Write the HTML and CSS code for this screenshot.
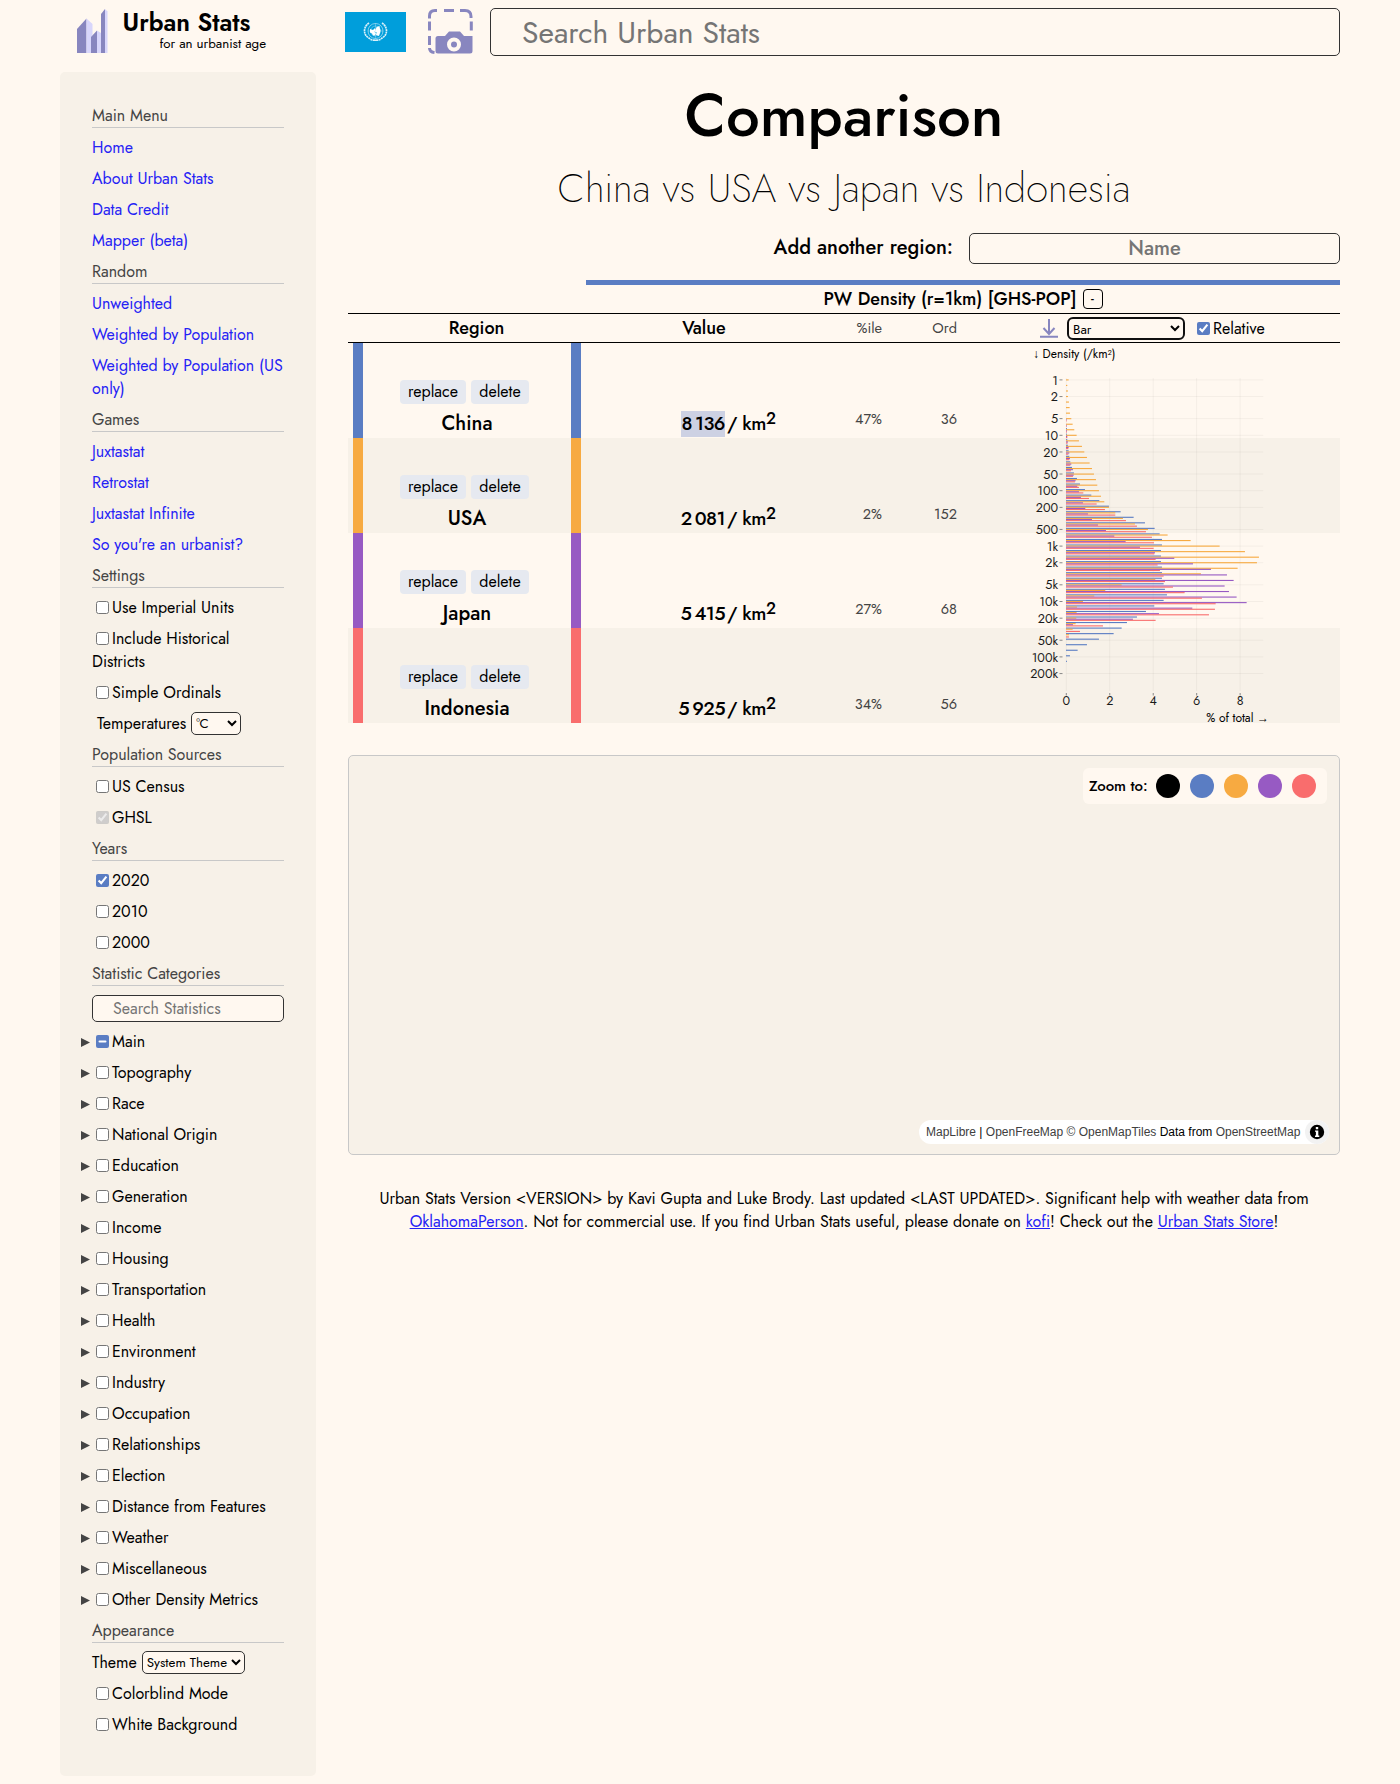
FILE: index.html
```html
<!DOCTYPE html>
<html lang="en">
<head>
<meta charset="utf-8">
<title>Urban Stats</title>
<link rel="stylesheet" href="styles.css">
</head>
<body>
<header class="header">
  <a class="logo" href="#">
    <svg class="logo-mark" width="32" height="44" viewBox="0 0 32 44">
      <path fill="#8886bf" d="M1 44V20L10.500 9.500V44z"/><path fill="#d8d6fb" d="M10.500 9.500L16.500 15V44H10.500z"/>
      <path fill="#8886bf" d="M15 44V28L21 21.500V44z"/><path fill="#d8d6fb" d="M21 21.500L25 24V44H21z"/>
      <path fill="#8886bf" d="M25 44V5L29 0V44z"/><path fill="#d8d6fb" d="M29 0L31.500 2.500V44H29z"/>
    </svg>
    <span class="logo-text"><b>Urban Stats</b><small>for an urbanist age</small></span>
  </a>
  <svg class="flag" width="61" height="40" viewBox="0 0 61 40">
    <rect width="61" height="40" fill="#009edb"/>
    <g fill="none" stroke="#fff">
      <circle cx="30.500" cy="19" r="7.500" stroke-width=".5"/><circle cx="30.500" cy="19" r="5" stroke-width=".3"/>
      <path d="M24 11c-6 4-6 12 0 15q3 3 8 2M37 11c6 4 6 12 0 15q-3 3-8 2" stroke-width="1.700" stroke-dasharray="2 .5" stroke-opacity=".85"/>
      <path d="M30.500 11.500v15M23 19h15" stroke-width=".3"/>
    </g>
    <path fill="#fff" d="M25 17l3 1 2-2 .5 2-1 2 1.500 1-1 2.500-2 0-1-2-2-1zM31.500 15l3-1 .5 3 .5 1-.5 3-1 3-3-1 .5-3-1.500 0z"/>
  </svg>
  <svg class="camera" width="45" height="45" viewBox="0 0 45 45">
    <g fill="none" stroke="#8886bf" stroke-width="3">
      <path d="M1.500 9.500V7Q1.500 1.500 7 1.500H9M16 1.500h10M32 1.500h5q6 0 6 6V9M1.500 12.500v9M1.500 27v9M1.500 39q0 4 5 4.500M43.300 12.500v9"/>
    </g>
    <path fill="#8886bf" d="M10 27h7l4-4.500h11l4 4.500h8.500v15q0 2.500-2.500 2.500H10q-2.500 0-2.500-2.500V29.500q0-2.500 2.500-2.500z"/>
    <circle cx="26" cy="35.500" r="5" fill="#8886bf" stroke="#fff8f0" stroke-width="4"/>
  </svg>
  <input class="search" placeholder="Search Urban Stats">
</header>

<div class="body">
<nav class="sidebar">
  <h2>Main Menu</h2>
  <a href="#">Home</a>
  <a href="#">About Urban Stats</a>
  <a href="#">Data Credit</a>
  <a href="#">Mapper (beta)</a>
  <h2>Random</h2>
  <a href="#">Unweighted</a>
  <a href="#">Weighted by Population</a>
  <a href="#">Weighted by Population (US only)</a>
  <h2>Games</h2>
  <a href="#">Juxtastat</a>
  <a href="#">Retrostat</a>
  <a href="#">Juxtastat Infinite</a>
  <a href="#">So you're an urbanist?</a>
  <h2>Settings</h2>
  <label><input type="checkbox">Use Imperial Units</label>
  <label><input type="checkbox">Include Historical Districts</label>
  <label><input type="checkbox">Simple Ordinals</label>
  <div class="field temp">Temperatures <select><option>°C</option></select></div>
  <h2>Population Sources</h2>
  <label><input type="checkbox">US Census</label>
  <label><input type="checkbox" checked disabled>GHSL</label>
  <h2>Years</h2>
  <label><input type="checkbox" checked>2020</label>
  <label><input type="checkbox">2010</label>
  <label><input type="checkbox">2000</label>
  <h2>Statistic Categories</h2>
  <input class="stat-search" placeholder="Search Statistics">
  <label class="cat"><input type="checkbox" id="main-category">Main</label>
  <label class="cat"><input type="checkbox">Topography</label>
  <label class="cat"><input type="checkbox">Race</label>
  <label class="cat"><input type="checkbox">National Origin</label>
  <label class="cat"><input type="checkbox">Education</label>
  <label class="cat"><input type="checkbox">Generation</label>
  <label class="cat"><input type="checkbox">Income</label>
  <label class="cat"><input type="checkbox">Housing</label>
  <label class="cat"><input type="checkbox">Transportation</label>
  <label class="cat"><input type="checkbox">Health</label>
  <label class="cat"><input type="checkbox">Environment</label>
  <label class="cat"><input type="checkbox">Industry</label>
  <label class="cat"><input type="checkbox">Occupation</label>
  <label class="cat"><input type="checkbox">Relationships</label>
  <label class="cat"><input type="checkbox">Election</label>
  <label class="cat"><input type="checkbox">Distance from Features</label>
  <label class="cat"><input type="checkbox">Weather</label>
  <label class="cat"><input type="checkbox">Miscellaneous</label>
  <label class="cat"><input type="checkbox">Other Density Metrics</label>
  <h2>Appearance</h2>
  <div class="field theme">Theme <select><option>System Theme</option></select></div>
  <label><input type="checkbox">Colorblind Mode</label>
  <label><input type="checkbox">White Background</label>
</nav>

<main class="content">
  <h1>Comparison</h1>
  <p class="subtitle">China vs USA vs Japan vs Indonesia</p>
  <div class="add"><span>Add another region:</span><input placeholder="Name"></div>

  <section class="table">
    <div class="stat-bar"></div>
    <div class="stat-name"><span>PW Density (r=1km) [GHS-POP]</span><button>-</button></div>
    <div class="head">
      <b class="h-region">Region</b><b class="h-value">Value</b><span class="pct">%ile</span><span class="ord">Ord</span>
      <div class="controls">
        <svg width="18" height="19" viewBox="0 0 18 19" fill="none" stroke="#8886bf" stroke-width="2"><path d="M9 0v14M3.500 9L9 15l5.500-6M0 17.700h18"/></svg>
        <select><option>Bar</option></select>
        <label><input type="checkbox" checked>Relative</label>
      </div>
    </div>
    <div class="rows">
      <div class="row blue"><i></i><div class="region"><div class="actions"><button>replace</button><button>delete</button></div><b>China</b></div><i></i><div class="value"><mark>8&#8201;136</mark><span>/ km<sup>2</sup></span></div><span class="pct">47%</span><span class="ord">36</span></div>
      <div class="row orange"><i></i><div class="region"><div class="actions"><button>replace</button><button>delete</button></div><b>USA</b></div><i></i><div class="value"><em>2&#8201;081</em><span>/ km<sup>2</sup></span></div><span class="pct">2%</span><span class="ord">152</span></div>
      <div class="row purple"><i></i><div class="region"><div class="actions"><button>replace</button><button>delete</button></div><b>Japan</b></div><i></i><div class="value"><em>5&#8201;415</em><span>/ km<sup>2</sup></span></div><span class="pct">27%</span><span class="ord">68</span></div>
      <div class="row red"><i></i><div class="region"><div class="actions"><button>replace</button><button>delete</button></div><b>Indonesia</b></div><i></i><div class="value"><em>5&#8201;925</em><span>/ km<sup>2</sup></span></div><span class="pct">34%</span><span class="ord">56</span></div>
      <svg class="chart" id="chart" width="250" height="384" viewBox="1020 343 250 384"></svg>
    </div>
  </section>

  <section class="map">
    <div class="zoom"><b>Zoom to:</b><i class="black"></i><i class="blue"></i><i class="orange"></i><i class="purple"></i><i class="red"></i></div>
    <div class="attribution"><span><a>MapLibre</a> | <a>OpenFreeMap</a> <a>© OpenMapTiles</a> Data from <a>OpenStreetMap</a></span>
      <svg width="24" height="24" viewBox="0 0 24 24"><circle cx="12" cy="12" r="12" fill="#f2f2f2"/><circle cx="12" cy="12" r="7.200"/><path fill="#fff" d="M10.800 7h2.400v2.200h-2.400zM10 10.400h3.300v5.200h1V17H10v-1.400h.9v-3.800H10z"/></svg>
    </div>
  </section>

  <footer>
    <div>Urban Stats Version &lt;VERSION&gt; by Kavi Gupta and Luke Brody. Last updated &lt;LAST UPDATED&gt;. Significant help with weather data from</div>
    <div><a href="#">OklahomaPerson</a>. Not for commercial use. If you find Urban Stats useful, please donate on <a href="#">kofi</a>! Check out the <a href="#">Urban Stats Store</a>!</div>
  </footer>
</main>
</div>
<script src="script.js"></script>
</body>
</html>
```
FILE: styles.css
```css
* { box-sizing: border-box; }
body {
  margin: 0;
  background: #fff8f0;
  color: #000;
  font: 16px/23px Jost, sans-serif;
  accent-color: #5a7dc3;
}
h1, h2, p { margin: 0; font-weight: 400; }
i, em { font-style: normal; }
a { color: #2522f5; }
button, input, select { font-family: inherit; color: #000; }
input[type="checkbox"] { width: 13px; height: 13px; margin: 3px 3px 3px 4px; flex: none; vertical-align: -1px; }
select {
  background: #fff8f0;
  border: 1px solid #333;
  border-radius: 5px;
  height: 23px;
  font-size: 13.333px;
  padding: 0;
}
.search, .stat-search, .add input {
  background: #fff8f0;
  border: 1px solid #333;
  border-radius: 5px;
}
::placeholder { color: #757575; opacity: 1; }

.header { display: flex; align-items: flex-start; height: 72px; padding: 8px 60px 0 76px; }
.logo { display: flex; width: 269px; color: #000; text-decoration: none; padding-top: 1px; }
.logo-text { display: flex; flex-direction: column; margin-left: 14.500px; }
.logo-text b { font-size: 24.600px; line-height: 27px; font-weight: 600; }
.logo-text small { font-size: 13.333px; line-height: 16px; margin-left: 37px; }
.flag { margin: 4px 22px 0 0; }
.camera { margin: 1px 17px 0 0; }
.search { flex: 1; height: 48px; padding: 0 31px; font-size: 30px; }

.body { display: flex; gap: 32px; padding: 0 60px 8px; }
.sidebar {
  width: 256px;
  height: 1704px;
  padding: 32px;
  border-radius: 5px;
  background: #f7f1e8;
  display: flex;
  flex-direction: column;
  gap: 8px;
}
.sidebar > * { flex: none; }
.sidebar a { text-decoration: none; }
.sidebar h2 { height: 24px; font-size: 16px; line-height: 23px; color: #444; border-bottom: 1px solid #c8c8c8; }
.field { height: 23px; display: flex; gap: 5px; }
.temp { padding-left: 5px; }
.temp select { width: 50px; }
.theme select { width: 103px; }
.stat-search { height: 27px; margin-top: 1px; padding: 0 20px; font-size: 16px; }
.cat { display: flex; align-items: center; margin-left: -11px; }
.cat::before {
  content: "";
  width: 9px;
  height: 9px;
  margin: 2px 2px 0 0;
  background: #444;
  clip-path: polygon(0 0, 100% 50%, 0 100%);
}

.content { width: 992px; }
h1 { text-align: center; font-size: 60px; line-height: 72px; font-weight: 500; padding-top: 8px; }
.subtitle { text-align: center; font-size: 40px; line-height: 50px; font-weight: 200; margin-top: 11px; }
.add { display: flex; justify-content: flex-end; margin-top: 20px; font-size: 20px; font-weight: 500; }
.add span { line-height: 30px; margin-right: 16px; }
.add input { width: 371px; height: 31px; text-align: center; font-size: 20px; font-weight: 500; }

.table { margin-top: 16px; }
.stat-bar { height: 5px; margin-left: 238px; background: #5a7dc3; }
.stat-name { height: 28px; padding-left: 238px; display: flex; justify-content: center; align-items: center; gap: 6px; font-size: 18px; font-weight: 500; }
.stat-name button { width: 20px; height: 20px; padding: 0; border: 1px solid #000; border-radius: 4px; background: none; font-size: 13px; line-height: 16px; font-weight: 500; }
.head { display: flex; height: 30px; border: solid #000; border-width: 1px 0; line-height: 27px; align-items: center; }
.head b { font-size: 18px; font-weight: 500; text-align: center; }
.h-region { width: 257px; }
.h-value { width: 198px; }
.head .pct { width: 79px; margin: 0; }
.head .ord { margin: 0; }
.pct, .ord { font-size: 14.500px; line-height: 20px; color: #444; text-align: right; margin-top: 66px; }
.pct { width: 106px; }
.ord { width: 75px; }
.controls { display: flex; align-items: center; margin-left: 83px; }
.controls select { width: 118px; margin: 0 8px 0 9px; border: 2px solid #101010; border-radius: 6px; }
.rows { position: relative; }
.row { display: flex; height: 95px; padding-left: 5px; }
.row:nth-child(even) { background: #f7f1e8; }
.row > i { width: 10px; background: var(--c); }
.blue { --c: #5a7dc3; } .orange { --c: #f7aa41; } .purple { --c: #975ac3; } .red { --c: #f96d6d; } .black { --c: #000; }
.region { width: 208px; padding-top: 37px; text-align: center; }
.region b { display: block; font-size: 20px; line-height: 28px; font-weight: 500; margin-top: 6px; }
.actions { display: flex; justify-content: center; gap: 5px; padding-right: 5px; }
.actions button { width: 66px; height: 24px; padding: 0; border: 0; border-radius: 4px; background: #e6e9f0; font-size: 16px; line-height: 22px; }
.actions button + button { width: 58px; }
.value { width: 195px; padding-top: 68px; display: flex; justify-content: flex-end; align-items: flex-start; font-size: 19px; line-height: 26px; font-weight: 500; }
.value mark, .value em { margin-right: 2px; letter-spacing: -.6px; }
.value span { letter-spacing: -.4px; }
.value mark { background: #cdd1e3; color: #000; }
.value sup { font-size: 16.500px; line-height: 0; vertical-align: 6px; letter-spacing: 0; }
.chart { position: absolute; left: 672px; top: 0; }
.chart text { font-size: 12.600px; fill: #1a1a1a; }
.chart .caption { font-size: 12px; fill: #000; }

.map { margin-top: 32px; height: 400px; border: 1px solid #c8c8c8; border-radius: 5px; background: #f7f1e8; padding: 12px; display: flex; flex-direction: column; justify-content: space-between; align-items: flex-end; }
.zoom { display: flex; align-items: center; width: 244px; height: 36px; padding-left: 6px; border-radius: 6px; background: #fff8f0; }
.zoom b { width: 57px; margin-right: 10px; font-size: 15px; font-weight: 500; white-space: nowrap; }
.zoom i { width: 24px; height: 24px; margin-right: 10px; border-radius: 50%; background: var(--c); flex: none; }
.attribution { display: flex; align-items: center; justify-content: space-between; width: 410px; height: 24px; margin: 0 -2px -2px 0; padding-left: 7px; background: #fff; border-radius: 12px; font: 12px/20px "Liberation Sans", sans-serif; white-space: nowrap; }
.attribution a { color: #404040; }
footer { margin-top: 32px; text-align: center; white-space: nowrap; display: flex; flex-direction: column; align-items: center; }
```
FILE: script.js
```js
document.getElementById('main-category').indeterminate = true;

// Population density histogram: ten bins per decade, bar lengths in thirds of a pixel.
const series = [
  ['#5a7dc3', [0,0,0,0,0,0,0,0,0,2,2,3,5,7,9,12,17,23,32,41,56,75,99,128,163,202,236,265,280,287,287,284,284,284,287,287,287,292,296,302,292,264,239,212,182,166,142,98,62,34,11,2]],
  ['#f7aa41', [7,3,5,5,8,10,11,15,19,24,31,38,47,54,62,70,77,83,89,93,98,104,114,128,147,170,206,245,304,373,460,536,578,572,514,404,267,166,117,84,50,32,31,30,28,19,8]],
  ['#975ac3', [0,0,0,0,0,0,0,1,1,2,3,5,7,9,11,15,20,22,28,33,38,44,50,57,65,77,95,119,144,178,221,266,324,380,434,482,502,475,488,511,541,378,278,200,20]],
  ['#f96d6d', [0,0,0,0,0,0,0,1,1,2,3,4,6,6,9,12,14,20,26,38,51,68,91,116,147,179,212,239,257,263,262,264,268,274,281,292,296,320,355,407,448,446,428,268,110,41,8]],
];
const X0 = 1066.3, Y0 = 379.9, STEP = 5.54;
let out = '<text class="caption" x="1033" y="358">↓ Density (/km²)</text>';
[['1', 0], ['2', 3.01], ['5', 6.99], ['10', 10], ['20', 13.01], ['50', 16.99], ['100', 20], ['200', 23.01], ['500', 26.99], ['1k', 30], ['2k', 33.01], ['5k', 36.99], ['10k', 40], ['20k', 43.01], ['50k', 46.99], ['100k', 50], ['200k', 53.01]].forEach(([label, n]) => {
  const y = Y0 + n * STEP;
  out += `<text x="1058" y="${y + 4.6}" text-anchor="end">${label}</text><path d="M1059.500 ${y}h3" stroke="#888"/><path d="M${X0} ${y}h197" stroke="#000" stroke-opacity=".045"/>`;
});
for (let v = 0; v <= 8; v += 2) {
  const x = X0 + v * 21.73;
  out += `<text x="${x}" y="705" text-anchor="middle">${v}</text><path d="M${x} 378V691" stroke="#000" stroke-opacity=".045"/><path d="M${x} 693v2.500" stroke="#888"/>`;
}
series.forEach(([color, bars], s) => bars.forEach((w, n) => {
  if (w) out += `<rect x="${X0 - .3}" y="${Y0 + n * STEP - 1.66 + s * 1.11}" width="${w / 3 + .3}" height="1.11" fill="${color}"/>`;
}));
out += '<text class="caption" x="1269" y="722" text-anchor="end">% of total →</text>';
document.getElementById('chart').innerHTML = out;
```
